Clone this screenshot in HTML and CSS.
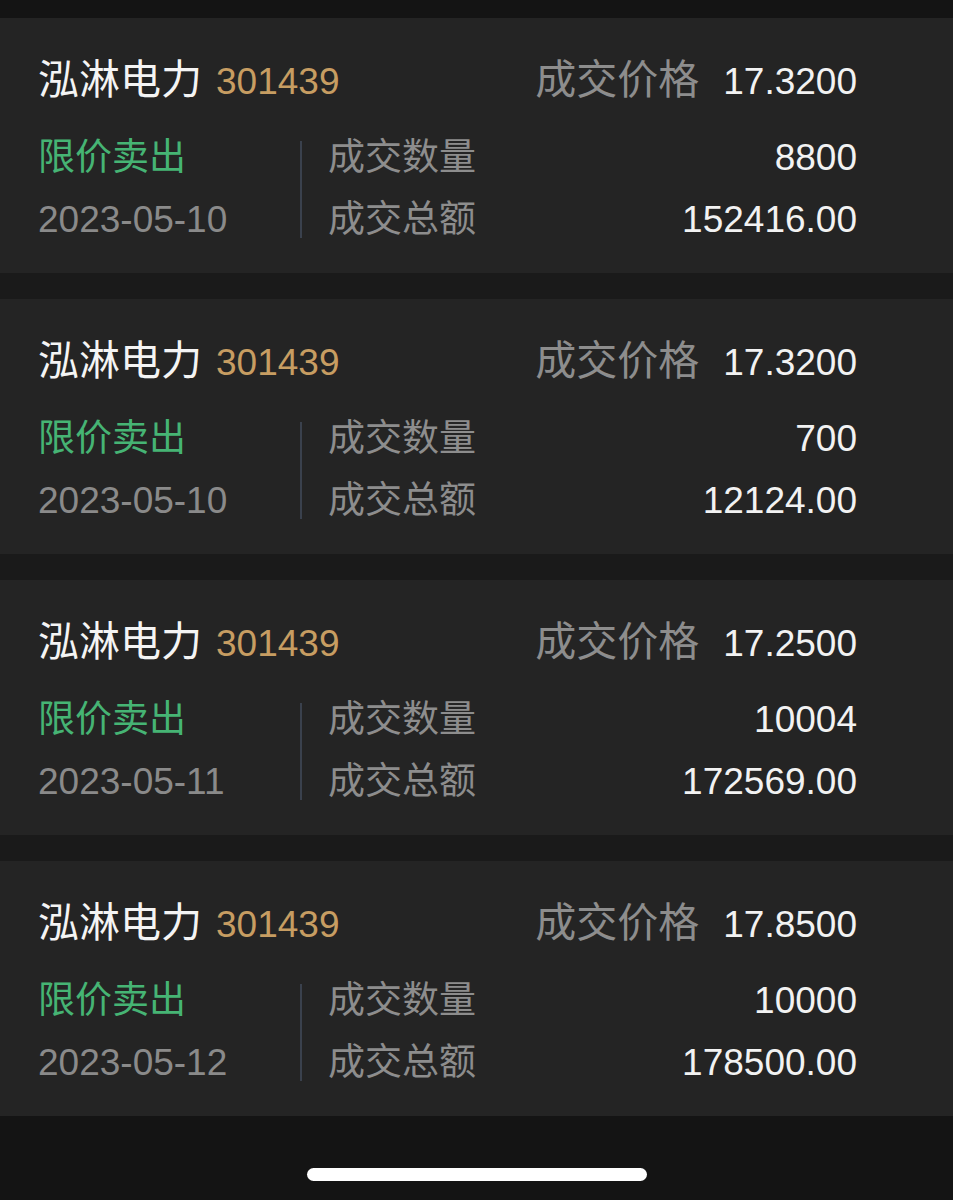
FILE: index.html
```html
<!DOCTYPE html>
<html>
<head>
    <meta charset="UTF-8">
    <title>成交记录</title>
    <meta name="viewport" content="width=device-width,minimum-scale=1.0,maximum-scale=1.0,user-scalable=no">
    <link rel="stylesheet" href="styles.css">
</head>
<body>
    <div class="deal_list">
        <div class="deal">
            <div class="deal_head">
                <div class="stock"><span class="cn name">泓淋电力</span><span class="code">301439</span></div>
                <div class="price"><span class="cn label">成交价格</span><span class="num">17.3200</span></div>
            </div>
            <div class="deal_body">
                <div class="type">限价卖出</div>
                <div class="line"></div>
                <div class="row"><span class="label">成交数量</span><span class="num">8800</span></div>
                <div class="date">2023-05-10</div>
                <div class="row"><span class="label">成交总额</span><span class="num">152416.00</span></div>
            </div>
        </div>
        <div class="deal">
            <div class="deal_head">
                <div class="stock"><span class="cn name">泓淋电力</span><span class="code">301439</span></div>
                <div class="price"><span class="cn label">成交价格</span><span class="num">17.3200</span></div>
            </div>
            <div class="deal_body">
                <div class="type">限价卖出</div>
                <div class="line"></div>
                <div class="row"><span class="label">成交数量</span><span class="num">700</span></div>
                <div class="date">2023-05-10</div>
                <div class="row"><span class="label">成交总额</span><span class="num">12124.00</span></div>
            </div>
        </div>
        <div class="deal">
            <div class="deal_head">
                <div class="stock"><span class="cn name">泓淋电力</span><span class="code">301439</span></div>
                <div class="price"><span class="cn label">成交价格</span><span class="num">17.2500</span></div>
            </div>
            <div class="deal_body">
                <div class="type">限价卖出</div>
                <div class="line"></div>
                <div class="row"><span class="label">成交数量</span><span class="num">10004</span></div>
                <div class="date">2023-05-11</div>
                <div class="row"><span class="label">成交总额</span><span class="num">172569.00</span></div>
            </div>
        </div>
        <div class="deal">
            <div class="deal_head">
                <div class="stock"><span class="cn name">泓淋电力</span><span class="code">301439</span></div>
                <div class="price"><span class="cn label">成交价格</span><span class="num">17.8500</span></div>
            </div>
            <div class="deal_body">
                <div class="type">限价卖出</div>
                <div class="line"></div>
                <div class="row"><span class="label">成交数量</span><span class="num">10000</span></div>
                <div class="date">2023-05-12</div>
                <div class="row"><span class="label">成交总额</span><span class="num">178500.00</span></div>
            </div>
        </div>
    </div>
    <div class="home_bar"><div class="pill"></div></div>
</body>
</html>
```

FILE: styles.css
```css
html,body{
    margin:0;
    padding:0;
}
body{
    width:953px;
    height:1200px;
    overflow:hidden;
    background:#141414;
    font-family:"Liberation Sans","Noto Sans CJK SC",sans-serif;
    color:#f2f2f2;
}
.deal_list{
    display:flex;
    flex-direction:column;
    gap:26px;
    padding-top:18px;
}
.deal{
    background:#242424;
    height:255px;
    box-sizing:border-box;
    padding:38px 96px 0 38px;
    box-shadow:0 26px 0 #1a1a1a;
}
.deal:last-child{
    box-shadow:none;
}
.deal_head{
    display:flex;
    justify-content:space-between;
    align-items:baseline;
    height:48px;
    line-height:48px;
    font-size:37px;
}
.deal_head .cn{
    font-size:41px;
}
.name{
    color:#f4f4f4;
}
.code{
    color:#c79d62;
    margin-left:14px;
}
.price .label{
    color:#8d8d8d;
    margin-right:24px;
}
.deal_body{
    display:grid;
    grid-template-columns:262px 2px 1fr;
    grid-template-rows:62px 62px;
    margin-top:23px;
    font-size:37px;
    line-height:62px;
}
.type{
    color:#46b474;
}
.date{
    color:#8a8a8a;
}
.line{
    grid-column:2;
    grid-row:1 / span 2;
    background:#3a414d;
    margin:14px 0 13px;
}
.row{
    display:flex;
    justify-content:space-between;
    padding-left:26px;
}
.row .label{
    color:#8d8d8d;
}
.home_bar{
    display:flex;
    justify-content:center;
    padding-top:52px;
}
.pill{
    width:340px;
    height:13px;
    border-radius:7px;
    background:#fff;
}
```
